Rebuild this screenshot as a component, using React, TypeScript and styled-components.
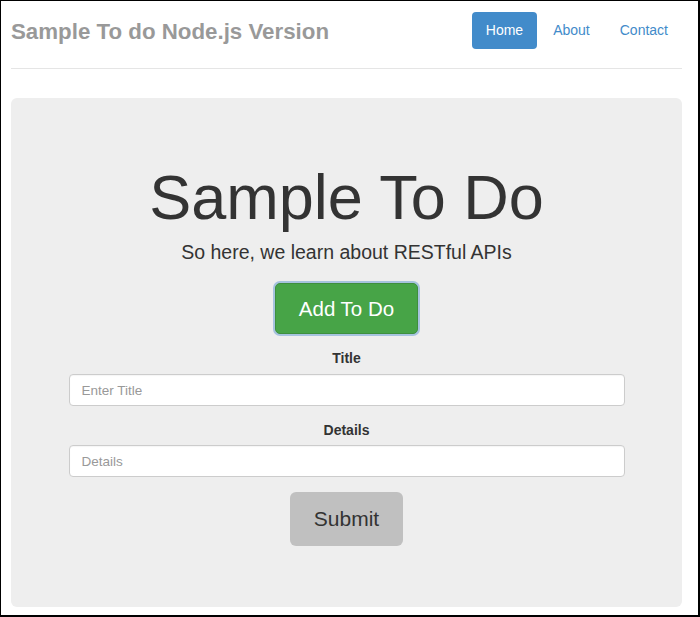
import React from "react";
import styled, { createGlobalStyle } from "styled-components";

const GlobalStyle = createGlobalStyle`
  html, body {
    margin: 0;
    padding: 0;
    background: #fff;
  }
  body {
    font-family: "Liberation Sans", Arial, Helvetica, sans-serif;
    color: #333;
  }
  * { box-sizing: border-box; }
`;

const Frame = styled.div`
  width: 700px;
  height: 617px;
  border-top: 1px solid #000;
  border-left: 1px solid #000;
  border-right: 2px solid #000;
  border-bottom: 2px solid #000;
  overflow: hidden;
  background: #fff;
`;

const Container = styled.div`
  padding: 0 16px 0 10px;
`;

const Header = styled.header`
  display: flex;
  align-items: center;
  justify-content: space-between;
  padding: 11px 0 19px 0;
  border-bottom: 1px solid #e5e5e5;
`;

const Brand = styled.div`
  font-size: 22.3px;
  font-weight: bold;
  color: #999;
  height: 37px;
  line-height: 35px;
  padding-top: 2px;
`;

const Nav = styled.nav`
  display: flex;
  gap: 2px;
`;

const NavLink = styled.a<{ $active?: boolean }>`
  display: block;
  height: 37px;
  line-height: 37px;
  padding: 0 14px;
  font-size: 14px;
  border-radius: 4px;
  text-decoration: none;
  color: ${(p) => (p.$active ? "#fff" : "#428bca")};
  background: ${(p) => (p.$active ? "#428bca" : "transparent")};
`;

const Jumbotron = styled.section`
  margin-top: 29px;
  height: 509px;
  background: #eee;
  border-radius: 6px;
  padding: 65px 0 61px;
  display: flex;
  flex-direction: column;
  align-items: center;
`;

const Title = styled.h1`
  margin: 0;
  font-size: 63px;
  line-height: 68px;
  font-weight: normal;
  color: #333;
`;

const Lead = styled.p`
  margin: 6px 0 0;
  font-size: 19.5px;
  line-height: 30px;
  color: #333;
`;

const AddButton = styled.button`
  margin-top: 16px;
  height: 51px;
  padding: 0 23px;
  font-family: inherit;
  font-size: 20.5px;
  color: #fff;
  background: #47a447;
  border: 1px solid #3e8f3e;
  border-radius: 5px;
  box-shadow: 0 0 0 2px #a6c3de;
  cursor: pointer;
`;

const Form = styled.form`
  width: 556px;
  margin-top: 14px;
  display: flex;
  flex-direction: column;
  align-items: center;
`;

const Group = styled.div<{ $gap?: number }>`
  width: 100%;
  margin-top: ${(p) => p.$gap ?? 0}px;
  display: flex;
  flex-direction: column;
  align-items: center;
`;

const Label = styled.label<{ $space?: number }>`
  font-size: 14px;
  line-height: 20px;
  font-weight: bold;
  color: #333;
  margin-bottom: ${(p) => p.$space ?? 6}px;
`;

const Input = styled.input`
  width: 100%;
  height: 32px;
  padding: 0 12px;
  font-family: inherit;
  font-size: 13.5px;
  color: #555;
  background: #fff;
  border: 1px solid #ccc;
  border-radius: 4px;
  box-shadow: inset 0 1px 1px rgba(0, 0, 0, 0.04);
  outline: none;
  &::placeholder {
    color: #999;
  }
`;

const SubmitButton = styled.button`
  margin-top: 15px;
  height: 54px;
  padding: 0 24px;
  font-family: inherit;
  font-size: 21px;
  color: #333;
  background: #c0c0c0;
  border: none;
  border-radius: 6px;
  cursor: pointer;
`;

export default function App() {
  return (
    <>
      <GlobalStyle />
      <Frame>
        <Container>
          <Header>
            <Brand>Sample To do Node.js Version</Brand>
            <Nav>
              <NavLink $active href="#">Home</NavLink>
              <NavLink href="#">About</NavLink>
              <NavLink href="#">Contact</NavLink>
            </Nav>
          </Header>
          <Jumbotron>
            <Title>Sample To Do</Title>
            <Lead>So here, we learn about RESTful APIs</Lead>
            <AddButton type="button">Add To Do</AddButton>
            <Form onSubmit={(e) => e.preventDefault()}>
              <Group>
                <Label htmlFor="title">Title</Label>
                <Input id="title" placeholder="Enter Title" />
              </Group>
              <Group $gap={14}>
                <Label htmlFor="details" $space={5}>Details</Label>
                <Input id="details" placeholder="Details" />
              </Group>
              <SubmitButton type="submit">Submit</SubmitButton>
            </Form>
          </Jumbotron>
        </Container>
      </Frame>
    </>
  );
}
